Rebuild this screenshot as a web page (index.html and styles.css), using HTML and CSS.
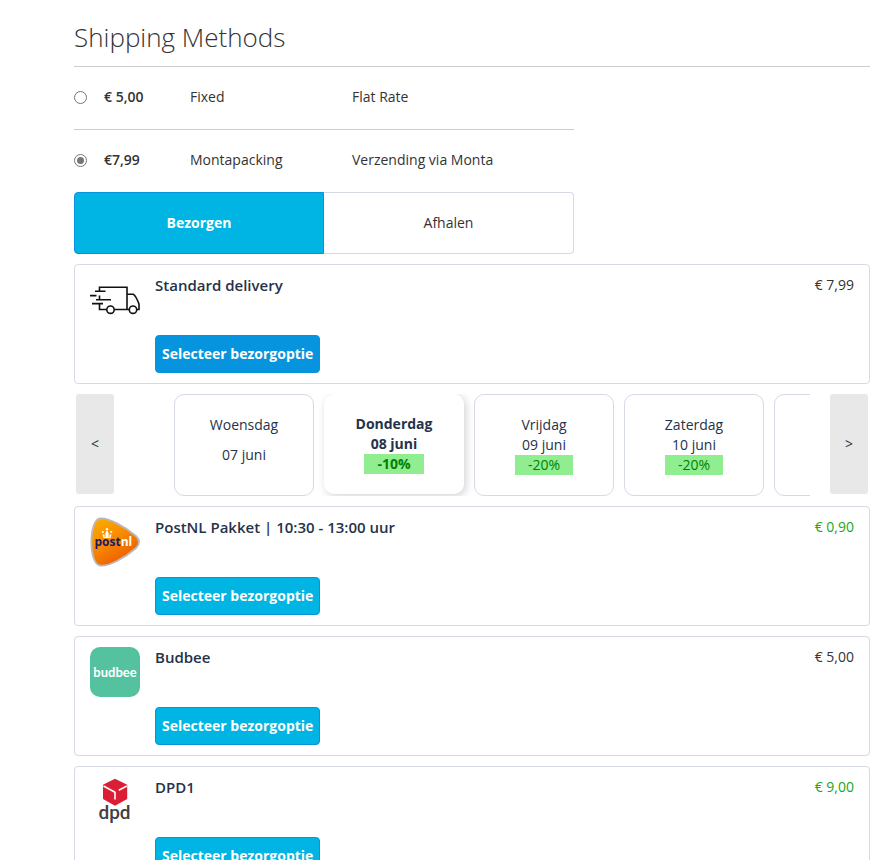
FILE: index.html
```html
<!DOCTYPE html>
<html lang="nl">
<head>
<meta charset="utf-8">
<meta name="viewport" content="width=device-width, initial-scale=1">
<title>Shipping Methods</title>
<link rel="stylesheet" href="styles.css">
</head>
<body>
<main class="page">
  <h1 class="title">Shipping Methods</h1>

  <table class="methods">
    <tbody>
      <tr>
        <td class="col-radio"><input type="radio" name="method" id="m-fixed" aria-label="Fixed"></td>
        <td class="col-price"><label for="m-fixed">€ 5,00</label></td>
        <td class="col-name">Fixed</td>
        <td>Flat Rate</td>
      </tr>
      <tr>
        <td class="col-radio"><input type="radio" name="method" id="m-monta" aria-label="Montapacking" checked></td>
        <td class="col-price"><label for="m-monta">€7,99</label></td>
        <td class="col-name">Montapacking</td>
        <td>Verzending via Monta</td>
      </tr>
    </tbody>
  </table>

  <div class="tabs">
    <button type="button" class="tab tab-active">Bezorgen</button>
    <button type="button" class="tab">Afhalen</button>
  </div>

  <section class="option">
    <svg class="logo" viewBox="0 0 50 50" fill="none" stroke="#111" stroke-width="1.6" aria-hidden="true">
      <path d="M9.5 16V12.3H37V34.500H24.500M9.500 20.500V25M9.500 29V34.500H16.500M37 19.300H43.500Q46 21 49 29V34.500H47M39 34.500H37"/>
      <path d="M5 16.300H15.500M0 20.600H6.500M6 24.800H21M2 28.600H13"/>
      <circle cx="20.500" cy="34.700" r="3.700"/>
      <circle cx="43" cy="34.700" r="3.700"/>
    </svg>
    <div class="option-body">
      <h2 class="option-name">Standard delivery</h2>
      <button type="button" class="select select-current">Selecteer bezorgoptie</button>
    </div>
    <span class="price">€ 7,99</span>
  </section>

  <div class="slider">
    <button type="button" class="arrow" aria-label="Vorige">&lt;</button>
    <div class="days">
      <button type="button" class="day day-plain"><span>Woensdag</span><span>07 juni</span></button>
      <button type="button" class="day day-active"><span>Donderdag</span><span>08 juni</span><span class="discount">-10%</span></button>
      <button type="button" class="day"><span>Vrijdag</span><span>09 juni</span><span class="discount">-20%</span></button>
      <button type="button" class="day"><span>Zaterdag</span><span>10 juni</span><span class="discount">-20%</span></button>
      <button type="button" class="day"></button>
    </div>
    <button type="button" class="arrow" aria-label="Volgende">&gt;</button>
  </div>

  <section class="option">
    <svg class="logo" viewBox="0 0 50 50" role="img" aria-label="PostNL">
      <defs>
        <linearGradient id="orange" x1="0" y1="0" x2="0.6" y2="1">
          <stop offset="0" stop-color="#fdb000"/>
          <stop offset="0.5" stop-color="#f88b00"/>
          <stop offset="1" stop-color="#ed5a00"/>
        </linearGradient>
      </defs>
      <path d="M10 1.500C18 .500 34 9 46 19Q52 25 46 31C35 41 18 50 10 48.500C-1.500 47-1.500 3 10 1.500Z" fill="url(#orange)" stroke="#b9b9bd" stroke-width="1.800"/>
      <g fill="#fff">
        <circle cx="17" cy="12.300" r="1.200"/>
        <circle cx="12.800" cy="15" r="1.100"/>
        <circle cx="21.200" cy="15" r="1.100"/>
        <path d="M12.500 17.500H15L16.300 14H17.700L19 17.500H21.500L20.500 21H13.500Z"/>
      </g>
      <path d="M15 17V20M19 17V20" stroke="#f99c00" stroke-width=".9"/>
      <text class="postnl" x="4.500" y="29"><tspan fill="#1a1a66">post</tspan><tspan fill="#fff">nl</tspan></text>
    </svg>
    <div class="option-body">
      <h2 class="option-name">PostNL Pakket | 10:30 - 13:00 uur</h2>
      <button type="button" class="select">Selecteer bezorgoptie</button>
    </div>
    <span class="price price-green">€ 0,90</span>
  </section>

  <section class="option">
    <svg class="logo" viewBox="0 0 50 50" role="img" aria-label="Budbee">
      <rect width="50" height="50" rx="10" fill="#54c19f"/>
      <text class="budbee" x="25" y="30" text-anchor="middle">budbee</text>
    </svg>
    <div class="option-body">
      <h2 class="option-name">Budbee</h2>
      <button type="button" class="select">Selecteer bezorgoptie</button>
    </div>
    <span class="price">€ 5,00</span>
  </section>

  <section class="option">
    <svg class="logo" viewBox="0 0 50 50" role="img" aria-label="DPD">
      <path d="M25 1.800L37.200 7.800V22L25 28.700L13 22V7.800Z" fill="#dc1e35"/>
      <path d="M13.500 9L25 15.200V22.500M36.800 9L28.800 13.200M25 15.200L22.500 13.800" fill="none" stroke="#fff" stroke-width="1.600"/>
      <text class="dpd" x="24.500" y="42" text-anchor="middle">dpd</text>
    </svg>
    <div class="option-body">
      <h2 class="option-name">DPD1</h2>
      <button type="button" class="select">Selecteer bezorgoptie</button>
    </div>
    <span class="price price-green">€ 9,00</span>
  </section>
</main>
</body>
</html>
```
FILE: styles.css
```css
* {
  box-sizing: border-box;
}

body {
  margin: 0;
  background: #fff;
  color: #333;
  font: 14px/20px "Open Sans", "Noto Sans", sans-serif;
}

button {
  font: inherit;
  color: inherit;
  cursor: pointer;
}

.page {
  height: 100vh;
  overflow-y: auto;
  scrollbar-width: none;
  padding: 20px 17px 20px 74px;
}

.title {
  margin: 0;
  padding-bottom: 12px;
  border-bottom: 1px solid #ccc;
  font-size: 26px;
  line-height: 34px;
  font-weight: 300;
}

.methods {
  width: 100%;
  max-width: 500px;
  border-spacing: 0;
  table-layout: fixed;
}

.methods td {
  height: 62px;
  padding: 0 0 2px;
}

.methods tr + tr td {
  height: 63px;
  border-top: 1px solid #ccc;
}

.methods .col-radio {
  width: 30px;
}

.methods input {
  display: grid;
  place-items: center;
  width: 13px;
  height: 13px;
  margin: 0;
  appearance: none;
  border: 1px solid #767676;
  border-radius: 50%;
}

.methods input:checked::before {
  content: "";
  width: 7px;
  height: 7px;
  border-radius: 50%;
  background: #767676;
}

.col-price {
  width: 86px;
  font-weight: 600;
}

.col-name {
  width: 162px;
}

.tabs {
  display: grid;
  grid-template-columns: 1fr 1fr;
  max-width: 500px;
  margin-bottom: 10px;
}

.tab {
  height: 62px;
  border: 1px solid #d6d9e6;
  border-left: 0;
  border-radius: 0 4px 4px 0;
  background: #fff;
}

.tab-active {
  border: 1px solid #0694de;
  border-radius: 4px 0 0 4px;
  background: #00b5e3;
  color: #fff;
  font-weight: 700;
}

.option {
  display: flex;
  gap: 15px;
  margin-bottom: 10px;
  padding: 10px 15px;
  border: 1px solid #d6d9e6;
  border-radius: 4px;
}

.logo {
  flex: none;
  width: 50px;
  height: 50px;
}

.option-body {
  flex: 1;
}

.option-name {
  margin: 0 0 40px;
  color: #25324b;
  font-size: 15px;
  line-height: 20px;
  font-weight: 600;
}

.select {
  display: block;
  height: 38px;
  padding: 0 6px;
  border: 1px solid #0694de;
  border-radius: 4px;
  background: #00b5e3;
  color: #fff;
  font-weight: 700;
}

.select-current {
  background: #0694de;
}

.price-green {
  color: #18a818;
}

.slider {
  display: flex;
  gap: 20px;
  margin-bottom: 10px;
  padding: 0 2px;
}

.arrow {
  flex: none;
  width: 38px;
  height: 100px;
  padding: 0;
  border: 0;
  border-radius: 3px;
  background: #e8e8e8;
}

.days {
  display: flex;
  flex: 1;
  align-items: flex-start;
  gap: 10px;
  min-width: 0;
  overflow: hidden;
  padding-left: 40px;
}

.day {
  display: flex;
  flex: none;
  flex-direction: column;
  align-items: center;
  width: 140px;
  height: 102px;
  padding: 20px 0 0;
  border: 1px solid #d6d9e6;
  border-radius: 10px;
  background: #fff;
  color: #25324b;
}

.day-plain {
  gap: 10px;
}

.day-active {
  height: 100px;
  border: 0;
  box-shadow: 2px 2px 8px rgba(0, 0, 0, 0.18);
  font-weight: 700;
}

.discount {
  padding: 0 13px;
  background: #90ee90;
  color: #008000;
}

.postnl {
  font-family: "Open Sans", sans-serif;
  font-size: 12px;
  font-weight: 700;
}

.budbee {
  fill: #fff;
  font-family: Lato, sans-serif;
  font-size: 13px;
  font-weight: 700;
}

.dpd {
  fill: #414042;
  font-family: Roboto, sans-serif;
  font-size: 19px;
  font-weight: 500;
}
```
